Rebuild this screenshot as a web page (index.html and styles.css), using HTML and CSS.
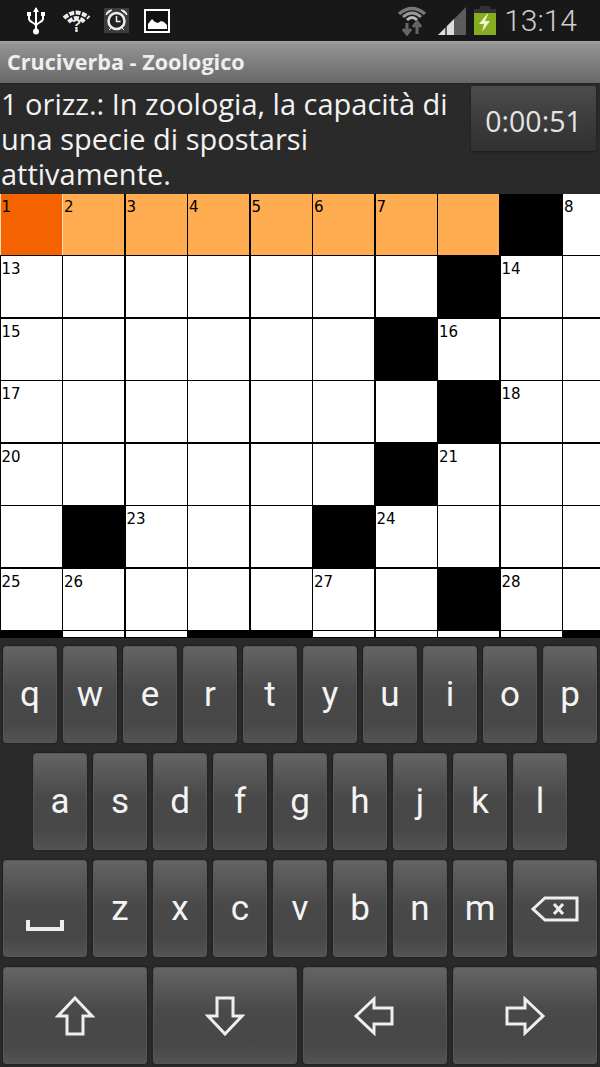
FILE: index.html
```html
<!doctype html>
<html lang="it">
<head>
	<meta charset="UTF-8">
	<title>Cruciverba - Zoologico</title>
	<link rel="stylesheet" href="styles.css">
</head>
<body>
	<div id="status">
		<svg class="ic-usb" width="20" height="28" viewBox="0 0 20 28">
			<path d="M10 1v23M3 8v4c0 3 7 4 7 7M17 8v4c0 3-7 4-7 7" fill="none" stroke="#fff" stroke-width="2"/>
			<path d="M10 0l3 5H7zM1 5h4v4H1zM15 5h4v4h-4z" fill="#fff"/>
			<circle cx="10" cy="24.500" r="3" fill="#fff"/>
		</svg>
		<svg class="ic-wifiq" width="29" height="22" viewBox="0 0 29 22">
			<path d="M2 8Q14.500-3 27 8M6.500 12Q14.500 4 22.500 12" fill="none" stroke="#eee" stroke-width="4" stroke-dasharray="5 1.500"/>
			<text x="14.500" y="19" text-anchor="middle" class="ic-q">?</text>
			<circle cx="14.500" cy="20.500" r="1.500" fill="#eee"/>
		</svg>
		<svg class="ic-alarm" width="25" height="25" viewBox="0 0 25 25">
			<rect width="25" height="25" fill="#3c3c3c"/>
			<circle cx="12.500" cy="13" r="8" fill="#222" stroke="#eee" stroke-width="2.500"/>
			<path d="M12.500 8v5.500h4" fill="none" stroke="#eee" stroke-width="1.500"/>
			<path d="M2 7Q3 2 8 2zM23 7Q22 2 17 2zM5 22l2-2M20 22l-2-2" fill="#eee" stroke="#eee"/>
		</svg>
		<svg class="ic-pic" width="26" height="24" viewBox="0 0 26 24">
			<rect x="1" y="1" width="24" height="22" fill="#111" stroke="#fff" stroke-width="2"/>
			<path d="M4 20v-5l4-5 3 3 3 1 3-2 3 1 3 3v4z" fill="#fff"/>
		</svg>
		<div class="status-right">
			<svg class="ic-wifi" width="28" height="30" viewBox="0 0 28 30">
				<path d="M1 8Q14-3 27 8" fill="none" stroke="#777" stroke-width="3.500"/>
				<path d="M5 11Q14 3 23 11" fill="none" stroke="#999" stroke-width="3"/>
				<path d="M9 14Q14 9 19 14" fill="none" stroke="#bbb" stroke-width="3"/>
				<path d="M9 17v9M5 23l4 5 4-5M19 28v-9M15 21l4-5 4 5" fill="none" stroke="#666" stroke-width="3"/>
			</svg>
			<svg class="ic-signal" width="28" height="28" viewBox="0 0 28 28">
				<path d="M0 28L28 0v28z" fill="#5c5c5c"/>
				<path d="M0 28l7-7v7zM9 19l7-7v16H9z" fill="#ddd"/>
			</svg>
			<svg class="ic-batt" width="22" height="29" viewBox="0 0 22 29">
				<rect x="6" width="10" height="4" fill="#333"/>
				<rect y="3" width="22" height="26" fill="#86ad1f"/>
				<rect y="3" width="22" height="4" fill="#333"/>
				<path d="M13 8L5 18h5l-2 8 8-11h-5l3-7z" fill="#eef5c8"/>
			</svg>
			<span class="clock">13:14</span>
		</div>
	</div>

	<div id="title">Cruciverba - Zoologico</div>

	<div id="question">
		<p class="def">1 orizz.: In zoologia, la capacità di una specie di spostarsi attivamente.</p>
		<a class="timer" href="javascript:;">0:00:51</a>
	</div>

	<div id="board">
		<div class="grid">
			<div class="cell sel">1</div><div class="cell hi">2</div><div class="cell hi">3</div><div class="cell hi">4</div><div class="cell hi">5</div><div class="cell hi">6</div><div class="cell hi">7</div><div class="cell hi"></div><div class="cell bk"></div><div class="cell">8</div>
			<div class="cell">13</div><div class="cell"></div><div class="cell"></div><div class="cell"></div><div class="cell"></div><div class="cell"></div><div class="cell"></div><div class="cell bk"></div><div class="cell">14</div><div class="cell"></div>
			<div class="cell">15</div><div class="cell"></div><div class="cell"></div><div class="cell"></div><div class="cell"></div><div class="cell"></div><div class="cell bk"></div><div class="cell">16</div><div class="cell"></div><div class="cell"></div>
			<div class="cell">17</div><div class="cell"></div><div class="cell"></div><div class="cell"></div><div class="cell"></div><div class="cell"></div><div class="cell"></div><div class="cell bk"></div><div class="cell">18</div><div class="cell"></div>
			<div class="cell">20</div><div class="cell"></div><div class="cell"></div><div class="cell"></div><div class="cell"></div><div class="cell"></div><div class="cell bk"></div><div class="cell">21</div><div class="cell"></div><div class="cell"></div>
			<div class="cell"></div><div class="cell bk"></div><div class="cell">23</div><div class="cell"></div><div class="cell"></div><div class="cell bk"></div><div class="cell">24</div><div class="cell"></div><div class="cell"></div><div class="cell"></div>
			<div class="cell">25</div><div class="cell">26</div><div class="cell"></div><div class="cell"></div><div class="cell"></div><div class="cell">27</div><div class="cell"></div><div class="cell bk"></div><div class="cell">28</div><div class="cell"></div>
			<div class="cell bk"></div><div class="cell"></div><div class="cell"></div><div class="cell bk"></div><div class="cell bk"></div><div class="cell"></div><div class="cell"></div><div class="cell"></div><div class="cell"></div><div class="cell bk"></div>
		</div>
	</div>

	<div id="keyboard">
		<div class="row">
			<a class="key">q</a><a class="key">w</a><a class="key">e</a><a class="key">r</a><a class="key">t</a><a class="key">y</a><a class="key">u</a><a class="key">i</a><a class="key">o</a><a class="key">p</a>
		</div>
		<div class="row row2">
			<a class="key">a</a><a class="key">s</a><a class="key">d</a><a class="key">f</a><a class="key">g</a><a class="key">h</a><a class="key">j</a><a class="key">k</a><a class="key">l</a>
		</div>
		<div class="row">
			<a class="key wide">
				<svg class="ic-space" width="38" height="11" viewBox="0 0 38 11"><path d="M2 0v9h34V0" fill="none" stroke="#eee" stroke-width="4"/></svg>
			</a>
			<a class="key">z</a><a class="key">x</a><a class="key">c</a><a class="key">v</a><a class="key">b</a><a class="key">n</a><a class="key">m</a>
			<a class="key wide">
				<svg width="48" height="26" viewBox="0 0 48 26"><path d="M2 13L14 2h32v22H14z" fill="none" stroke="#eee" stroke-width="3"/><path d="M23 8l9 10M32 8l-9 10" fill="none" stroke="#eee" stroke-width="3"/></svg>
			</a>
		</div>
		<div class="row">
			<a class="key arrow">
				<svg width="40" height="40" viewBox="0 0 40 40"><path d="M20 2l17 18H28v18H12V20H3z" fill="none" stroke="#eee" stroke-width="3"/></svg>
			</a>
			<a class="key arrow">
				<svg width="40" height="40" viewBox="0 0 40 40"><path d="M20 38l17-18H28V2H12v18H3z" fill="none" stroke="#eee" stroke-width="3"/></svg>
			</a>
			<a class="key arrow">
				<svg class="ic-left" width="40" height="40" viewBox="0 0 40 40"><path d="M2 20L20 3v9h18v16H20v9z" fill="none" stroke="#eee" stroke-width="3"/></svg>
			</a>
			<a class="key arrow">
				<svg width="40" height="40" viewBox="0 0 40 40"><path d="M38 20L20 3v9H2v16h18v9z" fill="none" stroke="#eee" stroke-width="3"/></svg>
			</a>
		</div>
	</div>
</body>
</html>
```

FILE: styles.css
```css
*{
	box-sizing: border-box;
}
body{
	margin: 0;
	width: 600px;
	height: 1067px;
	overflow: hidden;
	background-color: #2a2a2a;
	font-family: "Open Sans", "Noto Sans", sans-serif;
}
a{
	text-decoration: none;
}

/* status bar */
#status{
	display: flex;
	align-items: center;
	height: 41px;
	background-color: #181818;
}
.ic-usb{
	margin-left: 26px;
}
.ic-wifiq{
	margin-left: 16px;
}
.ic-q{
	font-family: "Liberation Sans", sans-serif;
	font-size: 15px;
	font-weight: bold;
	fill: #eee;
}
.ic-alarm{
	margin-left: 13px;
}
.ic-pic{
	margin-left: 15px;
}
.status-right{
	display: flex;
	align-items: center;
	margin-left: auto;
	padding-right: 23px;
}
.ic-signal{
	margin-left: 12px;
}
.ic-batt{
	margin-left: 8px;
}
.clock{
	margin-left: 8px;
	font-family: Roboto, sans-serif;
	font-size: 30px;
	font-weight: 300;
	color: #d0d0d0;
}

/* title */
#title{
	height: 43px;
	padding: 0 7px;
	line-height: 42px;
	font-size: 21.600px;
	font-weight: bold;
	color: #eee;
	background: linear-gradient(#a2a2a2, #929292 10%, #686868);
	border-bottom: 1px solid #222;
}

/* clue + timer */
#question{
	display: flex;
	height: 109.500px;
	background-color: #2a2a2a;
}
.def{
	width: 471px;
	margin: 0;
	padding: 2px 14px 0 1px;
	font-size: 29px;
	line-height: 35px;
	color: #f2f2f2;
}
.timer{
	width: 125px;
	height: 65px;
	margin-top: 2px;
	line-height: 71px;
	text-align: center;
	font-size: 28.500px;
	color: #e4e4e4;
	background: linear-gradient(#4c4c4c, #3a3a3a 60%, #303030);
	border-radius: 2px;
	box-shadow: 0 1px 2px #1a1a1a;
}

/* grid */
#board{
	height: 444.500px;
	overflow: hidden;
	background-color: #000;
	border-bottom: 1px solid #000;
}
.grid{
	display: grid;
	grid-template-columns: repeat(10, 61px);
	grid-auto-rows: 61px;
	gap: 1.500px;
	width: 640px;
	padding-left: 0.500px;
	font-family: "DejaVu Sans", sans-serif;
	font-size: 15px;
	line-height: 20px;
}
.cell{
	padding: 3px 0 0 1px;
	background-color: #fff;
	color: #000;
}
.hi{
	background-color: #ffab50;
}
.sel{
	background-color: #f56300;
	box-shadow: 1px 0 0 #ffdcb8, -1px 0 0 #ffdcb8;
}
.bk{
	background-color: #000;
}

/* keyboard */
#keyboard{
	display: flex;
	flex-direction: column;
	gap: 10px;
	height: 429px;
	padding: 8px 3px 0;
	background-color: #2a2a2a;
}
.row{
	display: flex;
	gap: 6px;
}
.row2{
	padding-left: 30px;
}
.key{
	display: flex;
	align-items: center;
	justify-content: center;
	width: 54px;
	height: 97px;
	font-family: Roboto, sans-serif;
	font-size: 35px;
	color: #f4f4f4;
	background: linear-gradient(#646464, #494949 45%, #474747 80%, #535353);
	border: 1px solid #575757;
	border-radius: 3px;
	box-shadow: 0 0 2px #111;
}
.wide{
	width: 84px;
}
.arrow{
	width: 144px;
}
.ic-space{
	margin-top: 34px;
}
.ic-left{
	margin-right: 3px;
}
```
